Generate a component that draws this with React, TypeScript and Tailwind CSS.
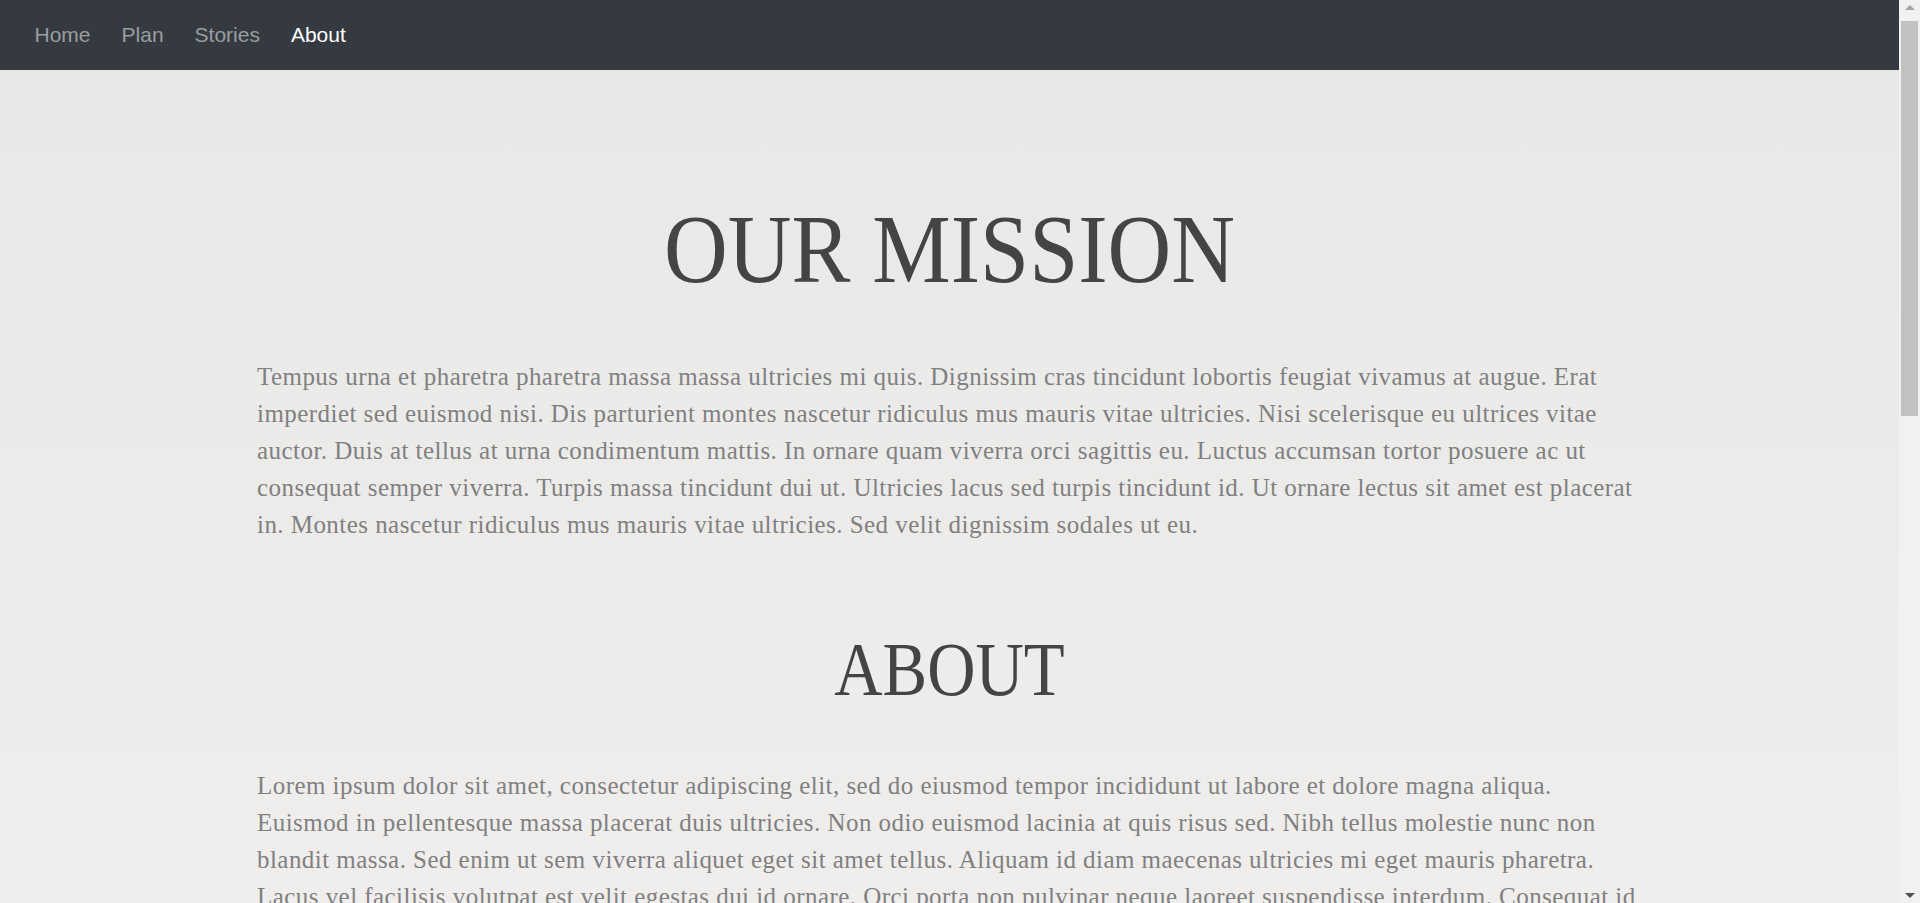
const links = [
  { label: 'Home', active: false },
  { label: 'Plan', active: false },
  { label: 'Stories', active: false },
  { label: 'About', active: true },
];

const mission =
  'Tempus urna et pharetra pharetra massa massa ultricies mi quis. Dignissim cras tincidunt lobortis feugiat vivamus at augue. Erat imperdiet sed euismod nisi. Dis parturient montes nascetur ridiculus mus mauris vitae ultricies. Nisi scelerisque eu ultrices vitae auctor. Duis at tellus at urna condimentum mattis. In ornare quam viverra orci sagittis eu. Luctus accumsan tortor posuere ac ut consequat semper viverra. Turpis massa tincidunt dui ut. Ultricies lacus sed turpis tincidunt id. Ut ornare lectus sit amet est placerat in. Montes nascetur ridiculus mus mauris vitae ultricies. Sed velit dignissim sodales ut eu.';

const about =
  'Lorem ipsum dolor sit amet, consectetur adipiscing elit, sed do eiusmod tempor incididunt ut labore et dolore magna aliqua. Euismod in pellentesque massa placerat duis ultricies. Non odio euismod lacinia at quis risus sed. Nibh tellus molestie nunc non blandit massa. Sed enim ut sem viverra aliquet eget sit amet tellus. Aliquam id diam maecenas ultricies mi eget mauris pharetra. Lacus vel facilisis volutpat est velit egestas dui id ornare. Orci porta non pulvinar neque laoreet suspendisse interdum. Consequat id porta nibh venenatis cras sed felis eget velit. Egestas integer eget aliquet nibh praesent tristique magna sit amet. Quam lacus suspendisse faucibus interdum posuere lorem ipsum dolor sit. Tortor at auctor urna nunc id cursus metus aliquam eleifend. Viverra nam libero justo laoreet sit amet cursus sit amet.';

const team =
  'Amet consectetur adipiscing elit ut aliquam purus sit amet luctus. Vitae congue mauris rhoncus aenean vel elit scelerisque mauris pellentesque. Pulvinar elementum integer enim neque volutpat ac tincidunt vitae semper. Nunc sed id semper risus in hendrerit gravida rutrum quisque. Faucibus ornare suspendisse sed nisi lacus sed viverra tellus in.';

function ScrollBar() {
  // window scrollbar as it shows in the screenshot
  return (
    <div className="w-[21px] shrink-0 h-screen bg-[#f1f1f1] flex flex-col">
      <div className="h-[21px] flex items-center justify-center pb-[6px]">
        <div className="w-0 h-0 border-x-[5px] border-x-transparent border-b-[5px] border-b-[#a3a3a3]" />
      </div>
      <div className="h-[395px] mx-[2px] bg-[#c1c1c1]" />
      <div className="flex-1" />
      <div className="h-[21px] flex items-center justify-center pt-[6px]">
        <div className="w-0 h-0 border-x-[5px] border-x-transparent border-t-[5px] border-t-[#505050]" />
      </div>
    </div>
  );
}

export default function App() {
  return (
    <div className="flex h-screen overflow-hidden">
      <div className="flex-1 min-w-0 overflow-y-auto [scrollbar-width:none]">
        <div className="min-h-[1970px] bg-[linear-gradient(180deg,#e8e8e6_0px,#efeeec_903px,#f0efed_100%)]">
          <nav className="h-[70px] bg-[#343a40] flex items-center pl-[19px] font-['Liberation_Sans',Arial,sans-serif] text-[21px]">
            {links.map((l) => (
              <a
                key={l.label}
                href="#"
                className={l.active ? 'px-[15.5px] text-white' : 'px-[15.5px] text-white/50'}
              >
                {l.label}
              </a>
            ))}
          </nav>

          <main className="pt-[130px] pb-24 px-[257px] font-['Liberation_Serif','Times_New_Roman',serif]">
            {/* Mission */}
            <h1 className="text-center text-[98px] leading-none text-[#444444] scale-x-[0.9]">
              OUR MISSION
            </h1>
            <p className="mt-[60px] text-[25px] leading-[37px] tracking-[0.45px] text-[#808080]">{mission}</p>

            {/* About */}
            <h2 className="mt-[88px] text-center text-[76px] leading-none text-[#444444] scale-x-[0.88]">
              ABOUT
            </h2>
            <p className="mt-[60px] text-[25px] leading-[37px] tracking-[0.45px] text-[#808080]">{about}</p>

            <h2 className="mt-[88px] text-center text-[76px] leading-none text-[#444444] scale-x-[0.88]">
              OUR TEAM
            </h2>
            <p className="mt-[60px] text-[25px] leading-[37px] tracking-[0.45px] text-[#808080]">{team}</p>
          </main>
        </div>
      </div>
      <ScrollBar />
    </div>
  );
}
